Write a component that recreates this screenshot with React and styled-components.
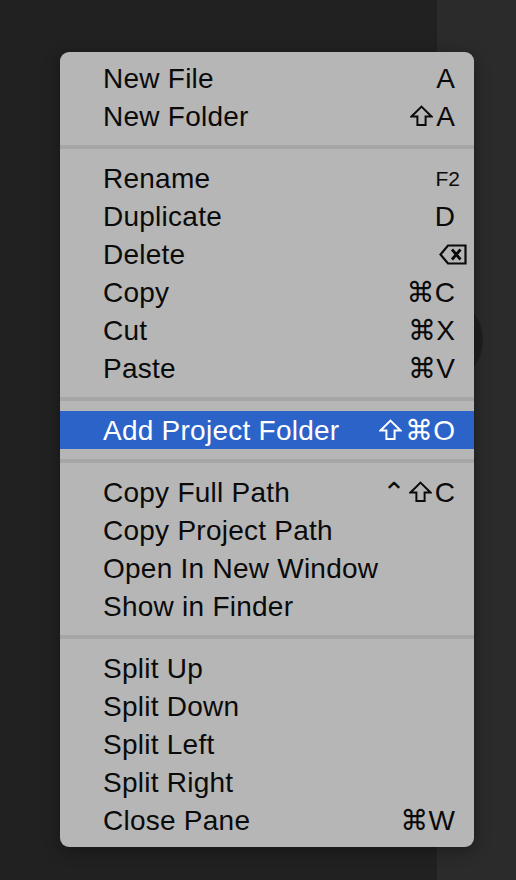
import styled, { createGlobalStyle } from "styled-components";

const GlobalStyle = createGlobalStyle`
  html, body {
    margin: 0;
    padding: 0;
    background: #212121;
  }
  body {
    font-family: "Liberation Sans", "DejaVu Sans", sans-serif;
  }
`;

// "shift" and "delete" are drawn, everything else is plain text
const groups = [
  [
    { label: "New File", keys: ["A"] },
    { label: "New Folder", keys: ["shift", "A"] },
  ],
  [
    { label: "Rename", keys: ["F2"], small: true },
    { label: "Duplicate", keys: ["D"] },
    { label: "Delete", keys: ["delete"], wide: true },
    { label: "Copy", keys: ["⌘C"] },
    { label: "Cut", keys: ["⌘X"] },
    { label: "Paste", keys: ["⌘V"] },
  ],
  [{ label: "Add Project Folder", keys: ["shift", "⌘O"], active: true }],
  [
    { label: "Copy Full Path", keys: ["⌃", "shift", "C"] },
    { label: "Copy Project Path" },
    { label: "Open In New Window" },
    { label: "Show in Finder" },
  ],
  [
    { label: "Split Up" },
    { label: "Split Down" },
    { label: "Split Left" },
    { label: "Split Right" },
    { label: "Close Pane", keys: ["⌘W"] },
  ],
];

const ShiftIcon = () => (
  <svg width="23" height="22" viewBox="0 0 23 22">
    <path
      d="M11.5 1.6 L21.5 11.5 L15.6 11.5 L15.6 20 L7.4 20 L7.4 11.5 L1.5 11.5 Z"
      fill="none"
      stroke="currentColor"
      strokeWidth="2"
      strokeLinejoin="miter"
    />
  </svg>
);

const DeleteIcon = () => (
  <svg width="28" height="21" viewBox="0 0 28 21">
    <path
      d="M9 1.5 H26.5 V19.5 H9 L1.5 10.5 Z"
      fill="none"
      stroke="currentColor"
      strokeWidth="2.2"
    />
    <path
      d="M13 5.5 L21.5 15.5 M21.5 5.5 L13 15.5"
      stroke="currentColor"
      strokeWidth="2.8"
    />
  </svg>
);

const renderKey = (key, i) => {
  if (key === "shift") return <ShiftIcon key={i} />;
  if (key === "delete") return <DeleteIcon key={i} />;
  return <span key={i}>{key}</span>;
};

const App = () => {
  return (
    <>
      <GlobalStyle />
      <Screen>
        <EditorPane />
        <SidePane>
          <RoundButton />
        </SidePane>
        <Menu>
          {groups.map((group, i) => (
            <Group key={i}>
              {i > 0 && <Separator />}
              {group.map((item) => (
                <Row key={item.label} $active={item.active}>
                  <Label>{item.label}</Label>
                  {item.keys && (
                    <Keys $small={item.small} $wide={item.wide}>
                      {item.keys.map(renderKey)}
                    </Keys>
                  )}
                </Row>
              ))}
            </Group>
          ))}
        </Menu>
      </Screen>
    </>
  );
};

const Screen = styled.div`
  position: relative;
  display: flex;
  width: 516px;
  height: 880px;
  overflow: hidden;
`;

const EditorPane = styled.div`
  width: 437px;
  background: #212121;
`;

const SidePane = styled.div`
  position: relative;
  flex: 1;
  background: #2b2b2b;
`;

const RoundButton = styled.div`
  position: absolute;
  left: -42px;
  top: 296px;
  width: 88px;
  height: 88px;
  border-radius: 50%;
  background: #1f1f1f;
`;

const Menu = styled.div`
  position: absolute;
  left: 60px;
  top: 52px;
  width: 414px;
  padding: 7px 0 8px;
  box-sizing: border-box;
  background: #b6b6b6;
  border-radius: 9px;
  box-shadow: 0 4px 16px rgba(0, 0, 0, 0.35);
`;

const Group = styled.div`
  display: flex;
  flex-direction: column;
`;

const Separator = styled.div`
  height: 4px;
  margin: 10px 0;
  background: #a6a6a6;
`;

const Row = styled.div`
  display: flex;
  align-items: center;
  justify-content: space-between;
  box-sizing: border-box;
  height: 38px;
  padding: 2px 19px 0 43px;
  font-size: 28px;
  line-height: 36px;
  color: ${(p) => (p.$active ? "#ffffff" : "#0a0a0a")};
  background: ${(p) => (p.$active ? "#2b63c9" : "transparent")};
`;

const Label = styled.span`
  white-space: nowrap;
  letter-spacing: 0.25px;
`;

const Keys = styled.span`
  display: inline-flex;
  align-items: center;
  gap: 3px;
  white-space: nowrap;
  font-size: ${(p) => (p.$small ? "21px" : "28px")};
  margin-right: ${(p) => (p.$small ? "-5px" : p.$wide ? "-12px" : "0")};

  > svg {
    margin-top: -2px;
  }
`;

export default App;
